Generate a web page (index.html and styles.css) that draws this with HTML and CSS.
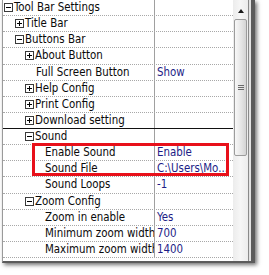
FILE: index.html
```html
<!DOCTYPE html>
<html>
<head>
<meta charset="utf-8">
<link rel="stylesheet" href="styles.css">
</head>
<body>
<div class="shot">
  <div class="panel">
    <div class="rows">
      <div class="row"><div class="name l0"><span class="exp"></span>Tool Bar Settings</div><div class="val"></div></div>
      <div class="row"><div class="name l1"><span class="exp plus"></span>Title Bar</div><div class="val"></div></div>
      <div class="row"><div class="name l1"><span class="exp"></span>Buttons Bar</div><div class="val"></div></div>
      <div class="row"><div class="name l2"><span class="exp plus"></span>About Button</div><div class="val"></div></div>
      <div class="row"><div class="name leaf2">Full Screen Button</div><div class="val">Show</div></div>
      <div class="row"><div class="name l2"><span class="exp plus"></span>Help Config</div><div class="val"></div></div>
      <div class="row"><div class="name l2"><span class="exp plus"></span>Print Config</div><div class="val"></div></div>
      <div class="row focus-next"><div class="name l2"><span class="exp plus"></span>Download setting</div><div class="val"></div></div>
      <div class="row"><div class="name l2"><span class="exp"></span>Sound</div><div class="val"></div></div>
      <div class="row"><div class="name leaf3">Enable Sound</div><div class="val">Enable</div></div>
      <div class="row"><div class="name leaf3">Sound File</div><div class="val">C:\Users\Mo...</div></div>
      <div class="row"><div class="name leaf3">Sound Loops</div><div class="val">-1</div></div>
      <div class="row"><div class="name l2"><span class="exp"></span>Zoom Config</div><div class="val"></div></div>
      <div class="row"><div class="name leaf3">Zoom in enable</div><div class="val">Yes</div></div>
      <div class="row"><div class="name leaf3">Minimum zoom width</div><div class="val">700</div></div>
      <div class="row"><div class="name leaf3">Maximum zoom width</div><div class="val">1400</div></div>
    </div>
    <div class="scroll">
      <div class="arrow"></div>
      <div class="thumb"><span class="grip"></span></div>
    </div>
    <div class="gap"></div>
  </div>
  <div class="mark"></div>
</div>
</body>
</html>
```

FILE: styles.css
```css
html, body {
  margin: 0;
  padding: 0;
  background: #ffffff;
}

.shot {
  position: relative;
  width: 269px;
  height: 275px;
  overflow: hidden;
}

.panel {
  margin-left: 2px;
  width: 253px;
  height: 263px;
  box-sizing: border-box;
  display: flex;
  background: #ffffff;
  border-left: 1px solid #9a9a9a;
  border-right: 4px solid #5b5b5b;
  border-bottom: 2px solid #5b5b5b;
  box-shadow: 2px 2px 4px rgba(0, 0, 0, 0.55);
  font-family: "DejaVu Sans Condensed", "DejaVu Sans", sans-serif;
  font-stretch: condensed;
  font-size: 11.4px;
  color: #0a0a0a;
}

.rows {
  width: 230px;
  flex: none;
}

.row {
  height: 16.13px;
  box-sizing: border-box;
  display: grid;
  grid-template-columns: 152px 1fr;
  border-bottom: 1px dotted #a8a8a8;
}

.row.focus-next {
  border-bottom: 1px solid #111111;
}

.name {
  border-right: 1px solid #a0a0a0;
  white-space: nowrap;
  overflow: hidden;
  display: flex;
  align-items: center;
  line-height: 15px;
}

.l0 { padding-left: 1px; }
.l1 { padding-left: 12px; }
.l2 { padding-left: 22px; }
.leaf2 { padding-left: 33px; }
.leaf3 { padding-left: 42px; }

.val {
  padding-left: 2px;
  color: #1d1d86;
  white-space: nowrap;
  overflow: hidden;
  line-height: 15px;
}

.exp {
  flex: none;
  width: 9px;
  height: 9px;
  box-sizing: border-box;
  border: 1px solid #3a3a3a;
  background: #ffffff;
  position: relative;
  margin-right: 1px;
}

.exp::before {
  content: "";
  position: absolute;
  left: 1px;
  top: 3px;
  width: 5px;
  height: 1px;
  background: #000000;
}

.exp.plus::after {
  content: "";
  position: absolute;
  left: 3px;
  top: 1px;
  width: 1px;
  height: 5px;
  background: #000000;
}

.scroll {
  width: 15px;
  flex: none;
  background: linear-gradient(to right, #ececec, #f6f6f6 50%, #ececec);
  border-right: 1px solid #8a8a8a;
  display: flex;
  flex-direction: column;
  align-items: center;
}

.arrow {
  margin-top: 9px;
  width: 0;
  height: 0;
  border-left: 3px solid transparent;
  border-right: 3px solid transparent;
  border-bottom: 4px solid #1a1a1a;
}

.thumb {
  margin-top: 6px;
  width: 13px;
  height: 137px;
  box-sizing: border-box;
  border: 1px solid #9c9c9c;
  border-radius: 2px;
  background: linear-gradient(to right, #f8f8f8, #e4e4e4 60%, #d4d4d4);
  display: flex;
  align-items: center;
  justify-content: center;
}

.grip {
  width: 6px;
  height: 5px;
  background: repeating-linear-gradient(to bottom, #6a6a6a 0, #6a6a6a 1px, transparent 1px, transparent 2px);
}

.gap {
  width: 2px;
  flex: none;
  background: #e2e2e2;
}

.mark {
  position: absolute;
  left: 32px;
  top: 143px;
  width: 197px;
  height: 33px;
  box-sizing: border-box;
  border: 3px solid #e8101a;
}
```
